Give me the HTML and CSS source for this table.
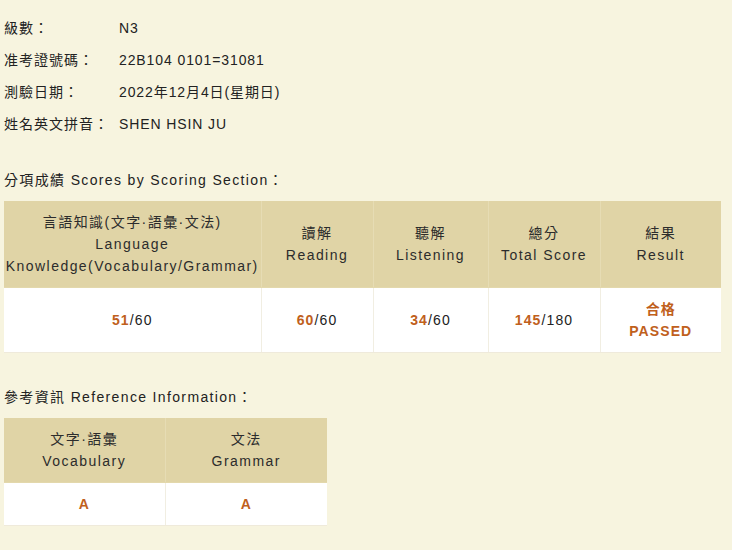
FILE: index.html
```html
<!DOCTYPE html>
<html lang="zh-Hant">
<head>
<meta charset="utf-8">
<title>Score</title>
<link rel="stylesheet" href="styles.css">
</head>
<body>
<div class="page">
  <div class="info">
    <div class="info-row"><span class="label">級數：</span><span class="value">N3</span></div>
    <div class="info-row"><span class="label">准考證號碼：</span><span class="value">22B104 0101=31081</span></div>
    <div class="info-row"><span class="label">測驗日期：</span><span class="value">2022年12月4日(星期日)</span></div>
    <div class="info-row"><span class="label">姓名英文拼音：</span><span class="value">SHEN HSIN JU</span></div>
  </div>

  <h2 class="section-title">分項成績 Scores by Scoring Section：</h2>
  <table class="score-table main">
    <colgroup>
      <col class="c1"><col class="c2"><col class="c3"><col class="c4"><col class="c5">
    </colgroup>
    <thead>
      <tr>
        <th>言語知識(文字·語彙·文法)<br>Language<br>Knowledge(Vocabulary/Grammar)</th>
        <th>讀解<br>Reading</th>
        <th>聽解<br>Listening</th>
        <th>總分<br>Total Score</th>
        <th>結果<br>Result</th>
      </tr>
    </thead>
    <tbody>
      <tr>
        <td><span class="hl">51</span>/60</td>
        <td><span class="hl">60</span>/60</td>
        <td><span class="hl">34</span>/60</td>
        <td><span class="hl">145</span>/180</td>
        <td class="hl">合格<br>PASSED</td>
      </tr>
    </tbody>
  </table>

  <h2 class="section-title second">參考資訊 Reference Information：</h2>
  <table class="score-table ref">
    <colgroup>
      <col class="r1"><col class="r2">
    </colgroup>
    <thead>
      <tr>
        <th>文字·語彙<br>Vocabulary</th>
        <th>文法<br>Grammar</th>
      </tr>
    </thead>
    <tbody>
      <tr>
        <td class="hl">A</td>
        <td class="hl">A</td>
      </tr>
    </tbody>
  </table>
</div>
</body>
</html>
```

FILE: styles.css
```css
html, body {
  margin: 0;
  padding: 0;
  background: #f7f4df;
}

body {
  font-family: "Liberation Sans", Arial, "Noto Sans CJK TC", sans-serif;
  font-size: 14px;
  color: #222;
  letter-spacing: 1px;
}

.page {
  padding: 12px 0 0 4px;
}

.info-row {
  display: flex;
  height: 32px;
  line-height: 32px;
}

.label {
  width: 115px;
  flex: none;
}

.value {
  letter-spacing: 0.9px;
}

.section-title {
  margin: 28px 0 9px;
  font-size: 14px;
  font-weight: normal;
  line-height: 24px;
  letter-spacing: 1.35px;
}

.section-title.second {
  margin-top: 32px;
}

.score-table {
  border-collapse: collapse;
  table-layout: fixed;
  text-align: center;
}

.score-table.main { width: 717px; }
.score-table.ref { width: 323px; }

.c1 { width: 257px; }
.c2 { width: 112px; }
.c3 { width: 115px; }
.c4 { width: 112px; }
.c5 { width: 121px; }
.r1 { width: 161px; }
.r2 { width: 162px; }

.score-table th {
  background: #e0d4a6;
  color: #2c2c2c;
  font-weight: normal;
  line-height: 22px;
  padding: 10px 0;
  letter-spacing: 1.45px;
  border-left: 1px solid #e6dcb4;
  border-bottom: 1px solid #e3d8ac;
}

.score-table td {
  background: #fff;
  line-height: 22px;
  padding: 10px 0;
  letter-spacing: 1.1px;
  border-left: 1px solid #f1eee2;
  border-bottom: 1px solid #efeadb;
}

.score-table th:first-child,
.score-table td:first-child {
  border-left: none;
}

.hl {
  color: #c0601c;
  font-weight: bold;
}
```
